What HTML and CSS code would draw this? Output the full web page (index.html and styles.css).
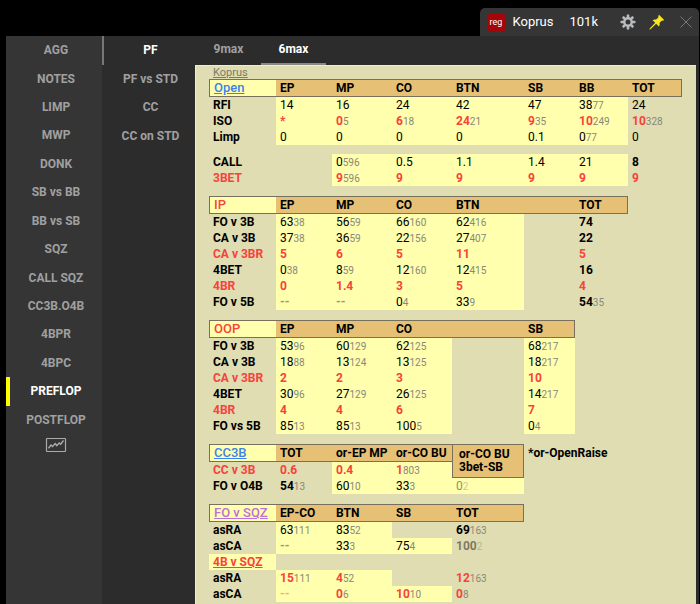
FILE: index.html
```
<!DOCTYPE html>
<html lang="en">
<head>
<meta charset="utf-8">
<title>Koprus 101k</title>
<link rel="stylesheet" href="styles.css">
</head>
<body>
<div class="window">
  <header class="titlebar">
    <span class="badge">reg</span>
    <span class="player">Koprus</span>
    <span class="hands">101k</span>
    <button class="tool gear" type="button" aria-label="Settings">
      <svg width="16" height="16" viewBox="0 0 16 16"><g fill="#b9bcbe"><g id="t"><rect x="6.7" y="0.6" width="2.6" height="3.4" rx=".5"/><rect x="6.7" y="12" width="2.6" height="3.4" rx=".5"/><rect x="0.6" y="6.7" width="3.4" height="2.6" rx=".5"/><rect x="12" y="6.7" width="3.4" height="2.6" rx=".5"/></g><use href="#t" transform="rotate(45 8 8)"/></g><circle cx="8" cy="8" r="3.7" fill="none" stroke="#b9bcbe" stroke-width="2.4"/></svg>
    </button>
    <button class="tool pin" type="button" aria-label="Pin">
      <svg width="16" height="16" viewBox="0 0 16 16" fill="#f8e71c"><path d="M10 .8 15.2 6l-1.3.8-1-.3-2.4 2.4c.4 1.300.2 2.500-.6 3.500L7.100 9.700 1.500 15.300.5 15.500.7 14.500 6.200 8.800 3.600 6.200c1-.8 2.200-1 3.500-.6l2.400-2.400-.3-1z"/></svg>
    </button>
    <button class="tool close" type="button" aria-label="Close">
      <svg width="14" height="14" viewBox="0 0 14 14" stroke="#777" fill="none"><path d="M1.500 1.500 12.500 12.500M12.500 1.500 1.500 12.500"/></svg>
    </button>
  </header>
  <div class="body">
    <nav class="side" aria-label="Groups">
      <div class="menu main">
        <a href="#">AGG</a><a href="#">NOTES</a><a href="#">LIMP</a><a href="#">MWP</a><a href="#">DONK</a><a href="#">SB vs BB</a><a href="#">BB vs SB</a><a href="#">SQZ</a><a href="#">CALL SQZ</a><a href="#">CC3B.O4B</a><a href="#">4BPR</a><a href="#">4BPC</a><a href="#" class="active">PREFLOP</a><a href="#">POSTFLOP</a>
      </div>
      <a href="#" class="graph" aria-label="Graph"><svg width="22" height="16" viewBox="0 0 22 16" fill="none" stroke="#aaa"><rect x="1.500" y="1.500" width="19" height="13" rx=".5" stroke-width="1.200"/><path d="M3.500 11.200 6 8l1.500 1.500L10.200 6.600l1.600 2L14.200 6l1.500 1.200L18.500 3.500" stroke-width="1.400"/></svg></a>
    </nav>
    <nav class="sub" aria-label="Pages">
      <div class="menu pages">
        <a href="#" class="current">PF</a><a href="#">PF vs STD</a><a href="#">CC</a><a href="#">CC on STD</a>
      </div>
    </nav>
    <main class="content">
      <nav class="tabs" aria-label="Table size"><a href="#">9max</a><a href="#" class="selected">6max</a></nav>
      <section class="panel">
        <a href="#" class="name">Koprus</a>

        <table>
          <colgroup><col class="c0"><col class="c1"><col class="c2"><col class="c2"><col class="c4"><col class="c5"><col class="c6"><col class="c7"></colgroup>
          <tbody>
          <tr class="head"><th class="title blue"><a href="#">Open</a></th><th>EP</th><th>MP</th><th>CO</th><th>BTN</th><th>SB</th><th>BB</th><th>TOT</th></tr>
          <tr><th>RFI</th><td class="y">14</td><td class="y">16</td><td class="y">24</td><td class="y">42</td><td class="y">47</td><td class="y">38<small>77</small></td><td>24</td></tr>
          <tr class="hot"><th class="plain">ISO</th><td class="y">*</td><td class="y">0<small>5</small></td><td class="y">6<small>18</small></td><td class="y">24<small>21</small></td><td class="y">9<small>35</small></td><td class="y">10<small>249</small></td><td>10<small>328</small></td></tr>
          <tr><th>Limp</th><td class="y">0</td><td class="y">0</td><td class="y">0</td><td class="y">0</td><td class="y">0.1</td><td class="y">0<small>77</small></td><td>0</td></tr>
          <tr class="gap"><td colspan="8"></td></tr>
          <tr><th>CALL</th><td></td><td class="y">0<small>596</small></td><td class="y">0.5</td><td class="y">1.1</td><td class="y">1.4</td><td class="y">21</td><td class="b">8</td></tr>
          <tr class="hot"><th>3BET</th><td></td><td class="y">9<small>596</small></td><td class="y">9</td><td class="y">9</td><td class="y">9</td><td class="y">9</td><td>9</td></tr>
          </tbody>
        </table>

        <table>
          <colgroup><col class="c0"><col class="c1"><col class="c2"><col class="c2"><col class="c4"><col class="c5"><col class="c6"></colgroup>
          <tbody>
          <tr class="head"><th class="title red">IP</th><th>EP</th><th>MP</th><th>CO</th><th>BTN</th><th></th><th>TOT</th></tr>
          <tr><th>FO v 3B</th><td class="y">63<small>38</small></td><td class="y">56<small>59</small></td><td class="y">66<small>160</small></td><td class="y">62<small>416</small></td><td></td><td class="b">74</td></tr>
          <tr><th>CA v 3B</th><td class="y">37<small>38</small></td><td class="y">36<small>59</small></td><td class="y">22<small>156</small></td><td class="y">27<small>407</small></td><td></td><td class="b">22</td></tr>
          <tr class="hot"><th>CA v 3BR</th><td class="y">5</td><td class="y">6</td><td class="y">5</td><td class="y">11</td><td></td><td>5</td></tr>
          <tr><th>4BET</th><td class="y">0<small>38</small></td><td class="y">8<small>59</small></td><td class="y">12<small>160</small></td><td class="y">12<small>415</small></td><td></td><td class="b">16</td></tr>
          <tr class="hot"><th>4BR</th><td class="y">0</td><td class="y">1.4</td><td class="y">3</td><td class="y">5</td><td></td><td>4</td></tr>
          <tr><th>FO v 5B</th><td class="y none">--</td><td class="y none">--</td><td class="y">0<small>4</small></td><td class="y">33<small>9</small></td><td></td><td class="b">54<small>35</small></td></tr>
          </tbody>
        </table>

        <table>
          <colgroup><col class="c0"><col class="c1"><col class="c2"><col class="c2"><col class="c4"><col class="c5"></colgroup>
          <tbody>
          <tr class="head"><th class="title red">OOP</th><th>EP</th><th>MP</th><th>CO</th><th></th><th>SB</th></tr>
          <tr><th>FO v 3B</th><td class="y">53<small>96</small></td><td class="y">60<small>129</small></td><td class="y">62<small>125</small></td><td></td><td class="y">68<small>217</small></td></tr>
          <tr><th>CA v 3B</th><td class="y">18<small>88</small></td><td class="y">13<small>124</small></td><td class="y">13<small>125</small></td><td></td><td class="y">18<small>217</small></td></tr>
          <tr class="hot"><th>CA v 3BR</th><td class="y">2</td><td class="y">2</td><td class="y">3</td><td></td><td class="y">10</td></tr>
          <tr><th>4BET</th><td class="y">30<small>96</small></td><td class="y">27<small>129</small></td><td class="y">26<small>125</small></td><td></td><td class="y">14<small>217</small></td></tr>
          <tr class="hot"><th>4BR</th><td class="y">4</td><td class="y">4</td><td class="y">6</td><td></td><td class="y">7</td></tr>
          <tr><th>FO vs 5B</th><td class="y">85<small>13</small></td><td class="y">85<small>13</small></td><td class="y">100<small>5</small></td><td></td><td class="y">0<small>4</small></td></tr>
          </tbody>
        </table>

        <table>
          <colgroup><col class="c0"><col class="c1"><col class="c2"><col class="c2"><col class="c4"><col class="note"></colgroup>
          <tbody>
          <tr class="head"><th class="title blue"><a href="#">CC3B</a></th><th>TOT</th><th>or-EP MP</th><th>or-CO BU</th><th class="tall" rowspan="2">or-CO BU<br>3bet-SB</th><td class="b">*or-OpenRaise</td></tr>
          <tr class="hot"><th>CC v 3B</th><td>0.6</td><td class="y">0.4</td><td class="y">1<small>803</small></td><td></td></tr>
          <tr><th>FO v O4B</th><td class="b">54<small>13</small></td><td class="y">60<small>10</small></td><td class="y">33<small>3</small></td><td class="y"><span class="dim">0<small>2</small></span></td><td></td></tr>
          </tbody>
        </table>

        <table>
          <colgroup><col class="c0"><col class="c1"><col class="c2"><col class="c2"><col class="c4"></colgroup>
          <tbody>
          <tr class="head"><th class="title violet"><a href="#">FO v SQZ</a></th><th>EP-CO</th><th>BTN</th><th>SB</th><th>TOT</th></tr>
          <tr><th>asRA</th><td class="y">63<small>111</small></td><td class="y">83<small>52</small></td><td></td><td class="b">69<small>163</small></td></tr>
          <tr><th>asCA</th><td class="y none">--</td><td class="y">33<small>3</small></td><td class="y">75<small>4</small></td><td class="b"><span class="dim">100<small>2</small></span></td></tr>
          <tr class="hot"><th class="y"><a href="#">4B v SQZ</a></th><td colspan="4"></td></tr>
          <tr class="hot"><th class="plain">asRA</th><td class="y">15<small>111</small></td><td class="y">4<small>52</small></td><td></td><td>12<small>163</small></td></tr>
          <tr class="hot"><th class="plain">asCA</th><td class="y"><span class="dim">--</span></td><td class="y">0<small>6</small></td><td class="y">10<small>10</small></td><td>0<small>8</small></td></tr>
          </tbody>
        </table>
      </section>
    </main>
  </div>
</div>
</body>
</html>
```
FILE: styles.css
```
* { box-sizing: border-box; }
body {
  margin: 0;
  background: #000;
  font: 12px/16px Roboto, "Liberation Sans", sans-serif;
}
a { color: inherit; text-decoration: none; }
.window {
  display: flex;
  flex-direction: column;
  min-height: 100vh;
  padding: 8px 1px 0 6px;
}

/* title tab */
.titlebar {
  align-self: flex-end;
  display: flex;
  align-items: center;
  height: 28px;
  padding: 0 6px 0 8px;
  background: #353535;
  border-radius: 5px 5px 0 0;
  color: #fff;
  font-size: 13px;
}
.badge {
  width: 17px;
  height: 19px;
  background: #a50508;
  border-radius: 3px;
  font-size: 9px;
  line-height: 18px;
  text-align: center;
}
.player { margin-left: 8px; }
.hands { margin-left: 16px; }
.tool {
  display: flex;
  padding: 0;
  border: 0;
  background: none;
}
.gear { margin-left: 22px; }
.pin { margin-left: 13px; }
.close { margin-left: 14px; }

/* menus */
.body { display: flex; flex: 1; background: #2c2c2c; }
.side { width: 96px; background: #353535; }
.sub { width: 93px; }
.menu {
  display: grid;
  grid-auto-rows: 1fr;
  color: #a0a0a0;
  font-weight: 700;
  text-align: center;
}
.main { height: 398px; }
.pages { height: 114px; }
.menu a {
  display: flex;
  align-items: center;
  justify-content: center;
  border: solid transparent;
  border-width: 0 0 0 4px;
}
.menu .active { color: #fff; border-left-color: #ff0; }
.menu .current {
  padding-left: 2px;
  color: #fff;
  border-width: 0 0 0 2px;
  border-left-color: #777;
}
.graph { display: flex; justify-content: center; padding: 3px 0 0 4px; }
.content {
  display: flex;
  flex-direction: column;
  flex: 1;
  padding-right: 3px;
}
.tabs {
  display: flex;
  padding-left: 1px;
  color: #a0a0a0;
  font-weight: 700;
  text-align: center;
}
.tabs a {
  width: 65px;
  height: 29px;
  line-height: 27px;
  border-bottom: 2px solid transparent;
}
.tabs .selected { color: #fff; border-color: #888; }

/* statistics */
.panel {
  flex: 1;
  padding: 0 13px;
  background: #dfddb1;
  border: solid #f0efc8;
  border-width: 1px 0 0 1px;
  color: #000;
}
.name {
  display: block;
  margin-left: 4px;
  color: #7b7b6c;
  font-size: 11px;
  line-height: 13px;
  text-decoration: underline;
}
table { table-layout: fixed; width: min-content; border-spacing: 0; }
table + table { margin-top: 10px; }
.c0 { width: 67px; }
.c1 { width: 56px; }
.c2 { width: 60px; }
.c4 { width: 72px; }
.c5 { width: 51px; }
.c6 { width: 53px; }
.c7 { width: 54px; }
.note { width: 104px; }
th, td {
  height: 16px;
  padding: 0 0 0 4px;
  line-height: 16px;
  text-align: left;
  white-space: nowrap;
}
.y { background: #ffffad; }
.b { font-weight: 700; }
.hot { color: #f8423c; font-weight: 700; }
.hot .plain { color: #000; }
.hot th a { text-decoration: underline; }
.head th {
  height: 18px;
  background: #e5c075;
  border: solid #77705c;
  border-width: 1px 0;
}
.head th:last-child { border-right-width: 1px; }
.head .title {
  border-left-width: 1px;
  background: #ffffad;
  font-size: 13px;
  font-weight: 500;
}
.title a { text-decoration: underline; }
.blue { color: #3e82ee; }
.red { color: #f8423c; }
.violet { color: #bd70d8; }
.head .tall {
  padding-left: 6px;
  border-width: 1px;
  line-height: 13px;
}
.gap td { height: 9px; line-height: 9px; }
small { color: #88887a; font-size: 10px; font-weight: 400; line-height: 10px; }
.none { color: #99997a; font-weight: 700; }
.dim { opacity: .45; }
```
